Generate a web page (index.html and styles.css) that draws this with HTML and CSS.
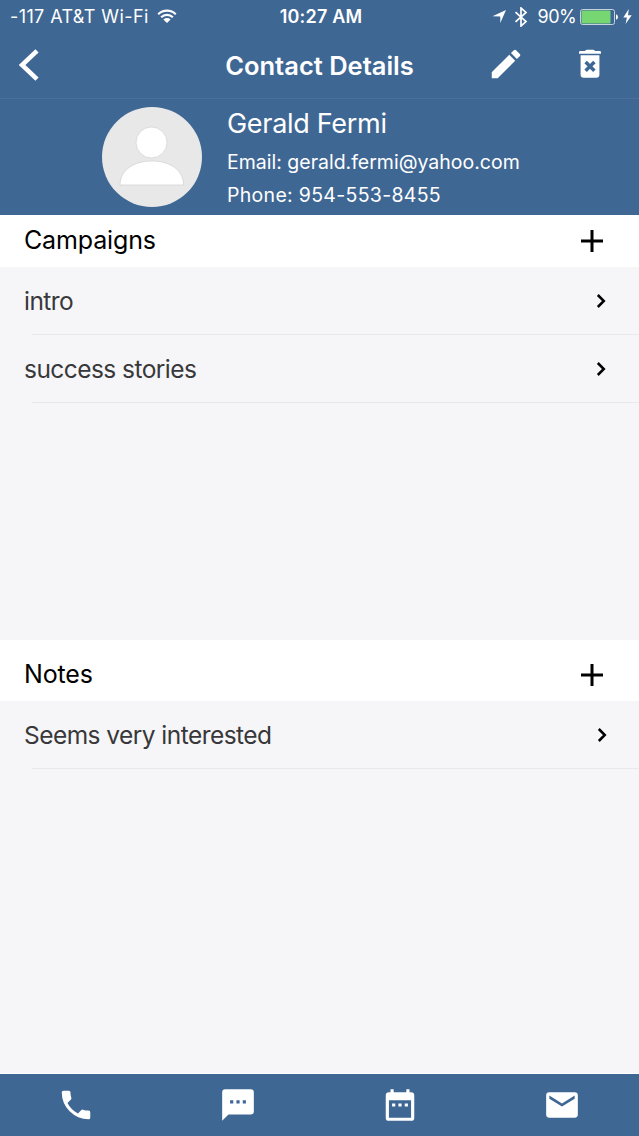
FILE: index.html
```html
<!DOCTYPE html>
<html lang="en">
<head>
    <meta charset="UTF-8">
    <meta name="viewport" content="width=device-width, initial-scale=1.0">
    <title>Contact Details</title>
    <link rel="stylesheet" href="styles.css">
</head>
<body>
    <header>
        <!-- Status Bar -->
        <div class="status-bar">
            <div class="status-left">
                <span class="carrier">-117 AT&amp;T Wi-Fi</span>
                <svg class="wifi" width="20" height="15" viewBox="0 0 20 15">
                    <path d="M1.2 5.2a12.5 12.5 0 0 1 17.6 0M4.1 8.3a8.4 8.4 0 0 1 11.8 0" fill="none" stroke="#fff" stroke-width="2.1"/>
                    <path d="M6.4 10.5a5.2 5.2 0 0 1 7.2 0L10 14z" fill="#fff"/>
                </svg>
            </div>
            <span class="time">10:27 AM</span>
            <div class="status-right">
                <svg width="15" height="15" viewBox="0 0 15 15"><path d="M0.5 7.2L14 1L8.3 14V7.4z" fill="#fff"/></svg>
                <svg class="bluetooth" width="14" height="20" viewBox="0 0 14 20"><path d="M1.5 5.2L12 14.6L7 19V1l5 4.4L1.5 14.8" fill="none" stroke="#fff" stroke-width="1.7"/></svg>
                <span class="percent">90%</span>
                <svg class="battery" width="38" height="16" viewBox="0 0 38 16">
                    <rect x="0.5" y="0.5" width="34" height="15" rx="2" fill="none" stroke="#c6d3df"/>
                    <rect x="1.5" y="1.5" width="29" height="13" rx="1" fill="#76d672"/>
                    <path d="M36 5.2q2 .6 2 2.8t-2 2.8z" fill="#fff"/>
                </svg>
                <svg class="bolt" width="9" height="15" viewBox="0 0 9 15"><path d="M5.8 0L0.3 8.4h3.6L2.6 15L8.7 6.2H5z" fill="#fff"/></svg>
            </div>
        </div>

        <!-- Title Bar -->
        <div class="title-bar">
            <a class="back" href="#" aria-label="Back">
                <svg width="20" height="32" viewBox="0 0 20 32"><path d="M18 1.8L3 16l15 14.2" fill="none" stroke="#fff" stroke-width="4.6"/></svg>
            </a>
            <h1>Contact Details</h1>
            <div class="actions">
                <svg width="38" height="38" viewBox="0 0 24 24"><path d="M3 17.25V21h3.75L17.81 9.94l-3.75-3.75L3 17.25zM20.71 7.04a1 1 0 0 0 0-1.41l-2.34-2.34a1 1 0 0 0-1.41 0l-1.83 1.83 3.75 3.75 1.83-1.83z" fill="#fff"/></svg>
                <svg width="24" height="30" viewBox="0 0 24 30">
                    <path d="M1 3.2Q1 2 2.2 2H7q.8-1.3 2-1.3h6q1.2 0 2 1.3h4.8Q23 2 23 3.2v1.6H1zM2.6 6.3h18.8v19.2q0 3.2-3.2 3.2H5.8q-3.2 0-3.2-3.2z" fill="#fff"/>
                    <path d="M7.6 13l8.8 8.8M16.4 13l-8.8 8.8" stroke="#3f6794" stroke-width="3.4"/>
                </svg>
            </div>
        </div>

        <!-- Contact Info -->
        <div class="profile">
            <svg class="avatar" width="100" height="100" viewBox="0 0 100 100">
                <circle cx="50" cy="50" r="50" fill="#e8e8e8"/>
                <circle cx="49.5" cy="35.5" r="15.5" fill="#fff" stroke="#d0d0d0" stroke-width="0.7"/>
                <path d="M18 78C18 63 32 54 50 54s31.5 9 31.5 24z" fill="#fff" stroke="#d0d0d0" stroke-width="0.7"/>
            </svg>
            <div class="info">
                <h2>Gerald Fermi</h2>
                <p class="email">Email: gerald.fermi@yahoo.com</p>
                <p class="phone">Phone: 954-553-8455</p>
            </div>
        </div>
    </header>

    <main>
        <section class="campaigns">
            <div class="section-head">
                <h3>Campaigns</h3>
                <svg width="22" height="22" viewBox="0 0 22 22"><path d="M11 0v22M0 11h22" stroke="#000" stroke-width="3"/></svg>
            </div>
            <ul>
                <li>
                    <span>intro</span>
                    <svg width="10" height="14" viewBox="0 0 10 14"><path d="M1.8 1L7.8 7l-6 6" fill="none" stroke="#000" stroke-width="2.5"/></svg>
                </li>
                <li>
                    <span>success stories</span>
                    <svg width="10" height="14" viewBox="0 0 10 14"><path d="M1.8 1L7.8 7l-6 6" fill="none" stroke="#000" stroke-width="2.5"/></svg>
                </li>
            </ul>
        </section>

        <section class="notes">
            <div class="section-head">
                <h3>Notes</h3>
                <svg width="22" height="22" viewBox="0 0 22 22"><path d="M11 0v22M0 11h22" stroke="#000" stroke-width="3"/></svg>
            </div>
            <ul>
                <li>
                    <span>Seems very interested</span>
                    <svg width="10" height="14" viewBox="0 0 10 14"><path d="M1.8 1L7.8 7l-6 6" fill="none" stroke="#000" stroke-width="2.5"/></svg>
                </li>
            </ul>
        </section>
    </main>

    <!-- Bottom Actions -->
    <footer>
        <svg width="38" height="38" viewBox="0 0 24 24"><path d="M6.62 10.79a15.15 15.15 0 0 0 6.59 6.59l2.2-2.2a1 1 0 0 1 1.02-.24c1.12.37 2.33.57 3.57.57a1 1 0 0 1 1 1V20a1 1 0 0 1-1 1A17 17 0 0 1 3 4a1 1 0 0 1 1-1h3.5a1 1 0 0 1 1 1c0 1.25.2 2.45.57 3.57a1 1 0 0 1-.25 1.02l-2.2 2.2z" fill="#fff"/></svg>
        <svg width="38" height="38" viewBox="0 0 24 24"><path d="M20 2H4a2 2 0 0 0-2 2v18l4-4h14a2 2 0 0 0 2-2V4a2 2 0 0 0-2-2zM9 11H7V9h2v2zm4 0h-2V9h2v2zm4 0h-2V9h2v2z" fill="#fff"/></svg>
        <svg width="38" height="38" viewBox="0 0 24 24"><path d="M9 11H7v2h2v-2zm4 0h-2v2h2v-2zm4 0h-2v2h2v-2zm2-7h-1V2h-2v2H8V2H6v2H5a2 2 0 0 0-2 2v14a2 2 0 0 0 2 2h14a2 2 0 0 0 2-2V6a2 2 0 0 0-2-2zm0 16H5V9h14v11z" fill="#fff"/></svg>
        <svg width="38" height="38" viewBox="0 0 24 24"><path d="M20 4H4a2 2 0 0 0-2 2v12a2 2 0 0 0 2 2h16a2 2 0 0 0 2-2V6a2 2 0 0 0-2-2zm0 4l-8 5-8-5V6l8 5 8-5v2z" fill="#fff"/></svg>
    </footer>
</body>
</html>
```

FILE: styles.css
```css
* {
    box-sizing: border-box;
    margin: 0;
    padding: 0;
}
body {
    font-family: Inter, "Liberation Sans", sans-serif;
    background-color: #f6f6f8;
    color: #000;
    height: 1136px;
    display: flex;
    flex-direction: column;
    overflow: hidden;
}
svg {
    display: block;
    flex-shrink: 0;
}
header {
    background-color: #3f6794; /* Steel Blue */
    color: white;
    height: 215px;
}
span, h1, h2, h3, p {
    white-space: nowrap;
}

/* Status bar */
.status-bar {
    display: grid;
    grid-template-columns: 1fr auto 1fr;
    align-items: center;
    height: 33px;
    padding: 0 7px 0 10px;
    font-size: 18px;
}
.status-left, .status-right {
    display: flex;
    align-items: center;
}
.status-right {
    justify-content: flex-end;
}
.carrier {
    letter-spacing: 0.4px;
}
.wifi {
    margin-left: 8px;
}
.time {
    font-weight: 600;
    letter-spacing: 0.2px;
}
.bluetooth {
    margin: 0 10px 0 7px;
}
.percent {
    letter-spacing: -0.6px;
}
.battery {
    margin: 0 5px 0 4px;
}

/* Title bar */
.title-bar {
    display: grid;
    grid-template-columns: minmax(0, 1fr) auto minmax(0, 1fr);
    align-items: center;
    height: 66px;
    padding: 0 19px 1px 19px;
    border-bottom: 1px solid #4a709b;
}
h1 {
    font-size: 25.5px;
    font-weight: 600;
}
.actions {
    display: flex;
    align-items: center;
    justify-content: flex-end;
    gap: 53px;
    margin-right: 18px;
    padding-bottom: 3px;
}

/* Contact info */
.profile {
    display: flex;
    padding: 8px 0 0 102px;
}
.info {
    margin-left: 25px;
}
h2 {
    font-size: 27px;
    font-weight: 400;
    line-height: 34px;
    letter-spacing: -0.3px;
}
.info p {
    font-size: 19.5px;
    line-height: 34px;
}
.info .email {
    margin-top: 4px;
}
.info .phone {
    line-height: 32px;
    letter-spacing: 0.3px;
}

/* Lists */
main {
    flex: 1;
    border-bottom: 1px solid #fff;
}
.campaigns {
    height: 425px;
}
.section-head {
    display: flex;
    align-items: center;
    justify-content: space-between;
    height: 52px;
    padding: 0 36px 0 24px;
    background-color: white;
}
.notes .section-head {
    height: 61px;
    padding-top: 9px;
}
h3 {
    font-size: 25px;
    font-weight: 400;
    letter-spacing: -0.15px;
    padding-bottom: 2px;
}
ul {
    list-style: none;
}
li {
    display: flex;
    align-items: center;
    justify-content: space-between;
    height: 68px;
    margin-left: 32px;
    padding-right: 33px;
    border-bottom: 1px solid #e9e9ec;
    color: #38383a;
    font-size: 24.5px;
    letter-spacing: -0.55px;
}
.notes li {
    padding-right: 32px;
}
li span {
    margin-left: -8px;
}

/* Bottom actions */
footer {
    display: flex;
    align-items: center;
    justify-content: space-between;
    height: 62px;
    padding: 0 58px 1px 57px;
    background-color: #3f6794;
}
```
